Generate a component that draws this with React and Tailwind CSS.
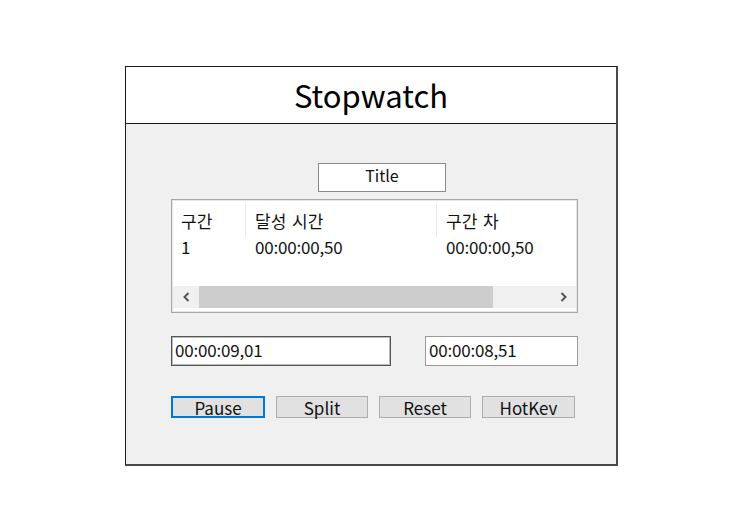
export default function App() {
  const f = { fontFamily: '"Noto Sans CJK KR", "Noto Sans", sans-serif' };
  const btn =
    "h-[22px] flex items-center justify-center bg-[#e1e1e1] text-[17px] text-[#111] leading-none";
  const num = "inline-block text-[17px] leading-none tracking-[-0.2px]";
  return (
    <div className="w-[743px] h-[531px] bg-white" style={f}>
      <div className="pt-[66px] pl-[125px]">
        <div className="w-[493px] h-[400px] border-t border-l border-[#1a1a1a] border-r-2 border-b-2 border-r-[#4a4a4a] border-b-[#4a4a4a] flex flex-col">
          <div className="h-[57px] bg-white border-b border-[#1a1a1a] flex items-center justify-center">
            <span className="text-[31px] text-black leading-none pb-[2px]">Stopwatch</span>
          </div>
          <div className="flex-1 bg-[#f0f0f0] pl-[45px] pt-[39px]">
            <div className="ml-[147px] w-[128px] h-[29px] bg-white border border-[#8a8a8a] flex justify-center items-start">
              <span className="text-[16px] leading-none mt-[3px] text-[#111]">Title</span>
            </div>
            <div className="mt-[7px] w-[407px] h-[114px] bg-white border border-[#a8a8a8] shadow-[inset_0_0_0_1px_#e6e6e6] flex flex-col">
              <div className="h-[37px] pt-[3px] flex items-stretch text-[17px] text-[#111] leading-none">
                <div className="w-[74px] pl-[9px] flex items-center border-r border-[#e8e8e8]">구간</div>
                <div className="w-[191px] pl-[9px] flex items-center border-r border-[#e8e8e8] [word-spacing:2px]">달성 시간</div>
                <div className="pl-[9px] flex items-center [word-spacing:2px]">구간 차</div>
              </div>
              <div className="h-[20px] flex items-center text-[#111]">
                <div className="w-[74px] pl-[9px]"><span className={num}>1</span></div>
                <div className="w-[191px] pl-[9px]"><span className={num}>00:00:00,50</span></div>
                <div className="pl-[9px]"><span className={num}>00:00:00,50</span></div>
              </div>
              <div className="flex-1" />
              <div className="h-[22px] mb-[4px] mx-[1px] bg-[#f0f0f0] flex items-center">
                <div className="w-[26px] h-full flex items-center justify-center">
                  <svg width="9" height="10" viewBox="0 0 9 10"><path d="M6.5 1 L2.5 5 L6.5 9" fill="none" stroke="#555" strokeWidth="2" /></svg>
                </div>
                <div className="w-[294px] h-full bg-[#cdcdcd]" />
                <div className="flex-1" />
                <div className="w-[26px] h-full flex items-center justify-center">
                  <svg width="9" height="10" viewBox="0 0 9 10"><path d="M2.5 1 L6.5 5 L2.5 9" fill="none" stroke="#555" strokeWidth="2" /></svg>
                </div>
              </div>
            </div>
            <div className="mt-[23px] flex items-start">
              <div className="w-[220px] h-[30px] bg-white border border-[#555] shadow-[inset_0_0_0_1px_#bbb] pl-[3px] pt-[1px] text-[#111]">
                <span className={num}>00:00:09,01</span>
              </div>
              <div className="ml-[34px] w-[153px] h-[30px] bg-white border border-[#9a9a9a] pl-[3px] pt-[1px] text-[#111]">
                <span className={num}>00:00:08,51</span>
              </div>
            </div>
            <div className="mt-[30px] flex items-start gap-[11px]">
              <div className={btn + " w-[94px] border-2 border-[#0078d7]"}>Pause</div>
              <div className={btn + " w-[92px] border border-[#adadad]"}>Split</div>
              <div className={btn + " w-[92px] border border-[#adadad]"}>Reset</div>
              <div className={btn + " w-[93px] border border-[#adadad]"}>HotKev</div>
            </div>
          </div>
        </div>
      </div>
    </div>
  );
}
